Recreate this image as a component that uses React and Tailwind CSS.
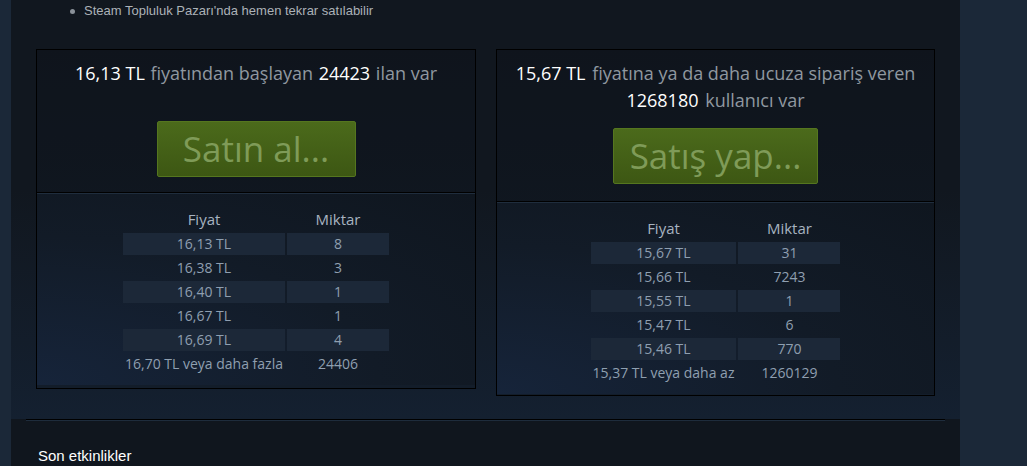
import React from "react";

const sellRows = [
  ["16,13 TL", "8"],
  ["16,38 TL", "3"],
  ["16,40 TL", "1"],
  ["16,67 TL", "1"],
  ["16,69 TL", "4"],
];
const buyRows = [
  ["15,67 TL", "31"],
  ["15,66 TL", "7243"],
  ["15,55 TL", "1"],
  ["15,47 TL", "6"],
  ["15,46 TL", "770"],
];

function OrderTable({ rows, last }) {
  return (
    <table className="mx-auto border-separate border-spacing-[2px] text-[14px] text-[#8f9fb0]">
      <thead>
        <tr>
          <th className="h-[22px] px-[2px] align-top text-[15px] font-normal leading-[20px] text-[#a7b3c0]">Fiyat</th>
          <th className="h-[22px] w-[102px] px-[2px] align-top text-[15px] font-normal leading-[20px] text-[#a7b3c0]">Miktar</th>
        </tr>
      </thead>
      <tbody>
        {rows.map((r, i) => (
          <tr key={i}>
            <td className={`h-[22px] px-[2px] text-center leading-[22px] ${i % 2 === 0 ? "bg-[#1c2838]" : ""}`}>{r[0]}</td>
            <td className={`h-[22px] w-[102px] px-[2px] text-center leading-[22px] ${i % 2 === 0 ? "bg-[#1c2838]" : ""}`}>{r[1]}</td>
          </tr>
        ))}
        <tr>
          <td className="h-[22px] px-[2px] text-center leading-[22px]">{last[0]}</td>
          <td className="h-[22px] w-[102px] px-[2px] text-center leading-[22px]">{last[1]}</td>
        </tr>
      </tbody>
    </table>
  );
}

function GreenButton({ children, className }) {
  return (
    <div
      className={`mx-auto flex items-center justify-center rounded-[2px] border border-[#55761f] bg-gradient-to-b from-[#4b6a1b] to-[#3d5713] text-[35px] font-normal leading-none text-[#7f9b58] ${className}`}
    >
      <span className="-mt-[2px]">{children}</span>
    </div>
  );
}

function Box({ title, button, buttonClass, rows, last, topPb, boxClass, bottomPb }) {
  return (
    <div className={`flex flex-col border border-black bg-gradient-to-b from-[#0f151d] to-[#131d2a] ${boxClass}`}>
      <div className={`flex flex-col bg-[#0e141c]/40 pt-[10px] ${topPb}`}>
        <div className="text-center text-[18px] font-normal leading-[27px] text-[#8f98a0]">{title}</div>
        <GreenButton className={buttonClass}>{button}</GreenButton>
      </div>
      <div className="h-[1px] bg-black" />
      <div className={`bg-[radial-gradient(ellipse_at_bottom_left,#16243a_0%,#121b27_55%,#0f161f_100%)] border-t border-[#1f2d3d] pt-[13px] ${bottomPb}`}>
        <OrderTable rows={rows} last={last} />
      </div>
    </div>
  );
}

export default function App() {
  return (
    <div
      className="flex h-[466px] w-[1027px] overflow-hidden bg-[#1b2838]"
      style={{ fontFamily: '"Open Sans", "Noto Sans", sans-serif' }}
    >
      <div className="w-[11px] shrink-0 bg-[#1b2838]" />
      <div className="flex w-[949px] shrink-0 flex-col bg-[#10161e]">
        <div className="flex flex-col bg-[linear-gradient(to_bottom,#11171f_0%,#11171f_45%,#142030_100%)]">
          <ul
            className="pl-[59px] pt-[2px] text-[13px] leading-[18px] text-[#acb2b8]"
            style={{ fontFamily: '"Liberation Sans", Arial, sans-serif' }}
          >
            <li className="flex items-center">
              <span className="mr-[9px] inline-block h-[5px] w-[5px] rounded-full bg-[#8a9199]" />
              <span>Steam Topluluk Pazarı'nda hemen tekrar satılabilir</span>
            </li>
          </ul>
          <div className="ml-[25px] mt-[29px] flex items-start gap-[20px] pb-[23px]">
            <Box
              boxClass="w-[440px] h-[340px]"
              topPb="pb-[15px]"
              bottomPb="pb-[8px]"
              buttonClass="mt-[34px] h-[56px] w-[199px]"
              title={
                <>
                  <span className="mr-[1px] text-white">16,13 TL</span>{" "}
                  <span>fiyatından başlayan</span>{" "}
                  <span className="mx-[1px] text-white">24423</span>{" "}
                  <span>ilan var</span>
                </>
              }
              button="Satın al..."
              rows={sellRows}
              last={["16,70 TL veya daha fazla", "24406"]}
            />
            <Box
              boxClass="w-[439px] h-[347px]"
              topPb="pb-[17px]"
              bottomPb="pb-[8px]"
              buttonClass="mt-[14px] h-[56px] w-[205px]"
              title={
                <>
                  <span className="mr-[2px] text-white">15,67 TL</span>{" "}
                  <span>fiyatına ya da daha ucuza sipariş veren</span>
                  <br />
                  <span className="mr-[2px] text-white">1268180</span>{" "}
                  <span>kullanıcı var</span>
                </>
              }
              button="Satış yap..."
              rows={buyRows}
              last={["15,37 TL veya daha az", "1260129"]}
            />
          </div>
        </div>
        <div className="mx-[15px] h-[2px] border-t border-black bg-[#1e2c3c]" />
        <div
          className="pl-[27px] pt-[25px] text-[15px] leading-[20px] text-white"
          style={{ fontFamily: '"Liberation Sans", Arial, sans-serif' }}
        >
          Son etkinlikler
        </div>
      </div>
      <div className="flex-1 bg-[#1b2838]" />
    </div>
  );
}
